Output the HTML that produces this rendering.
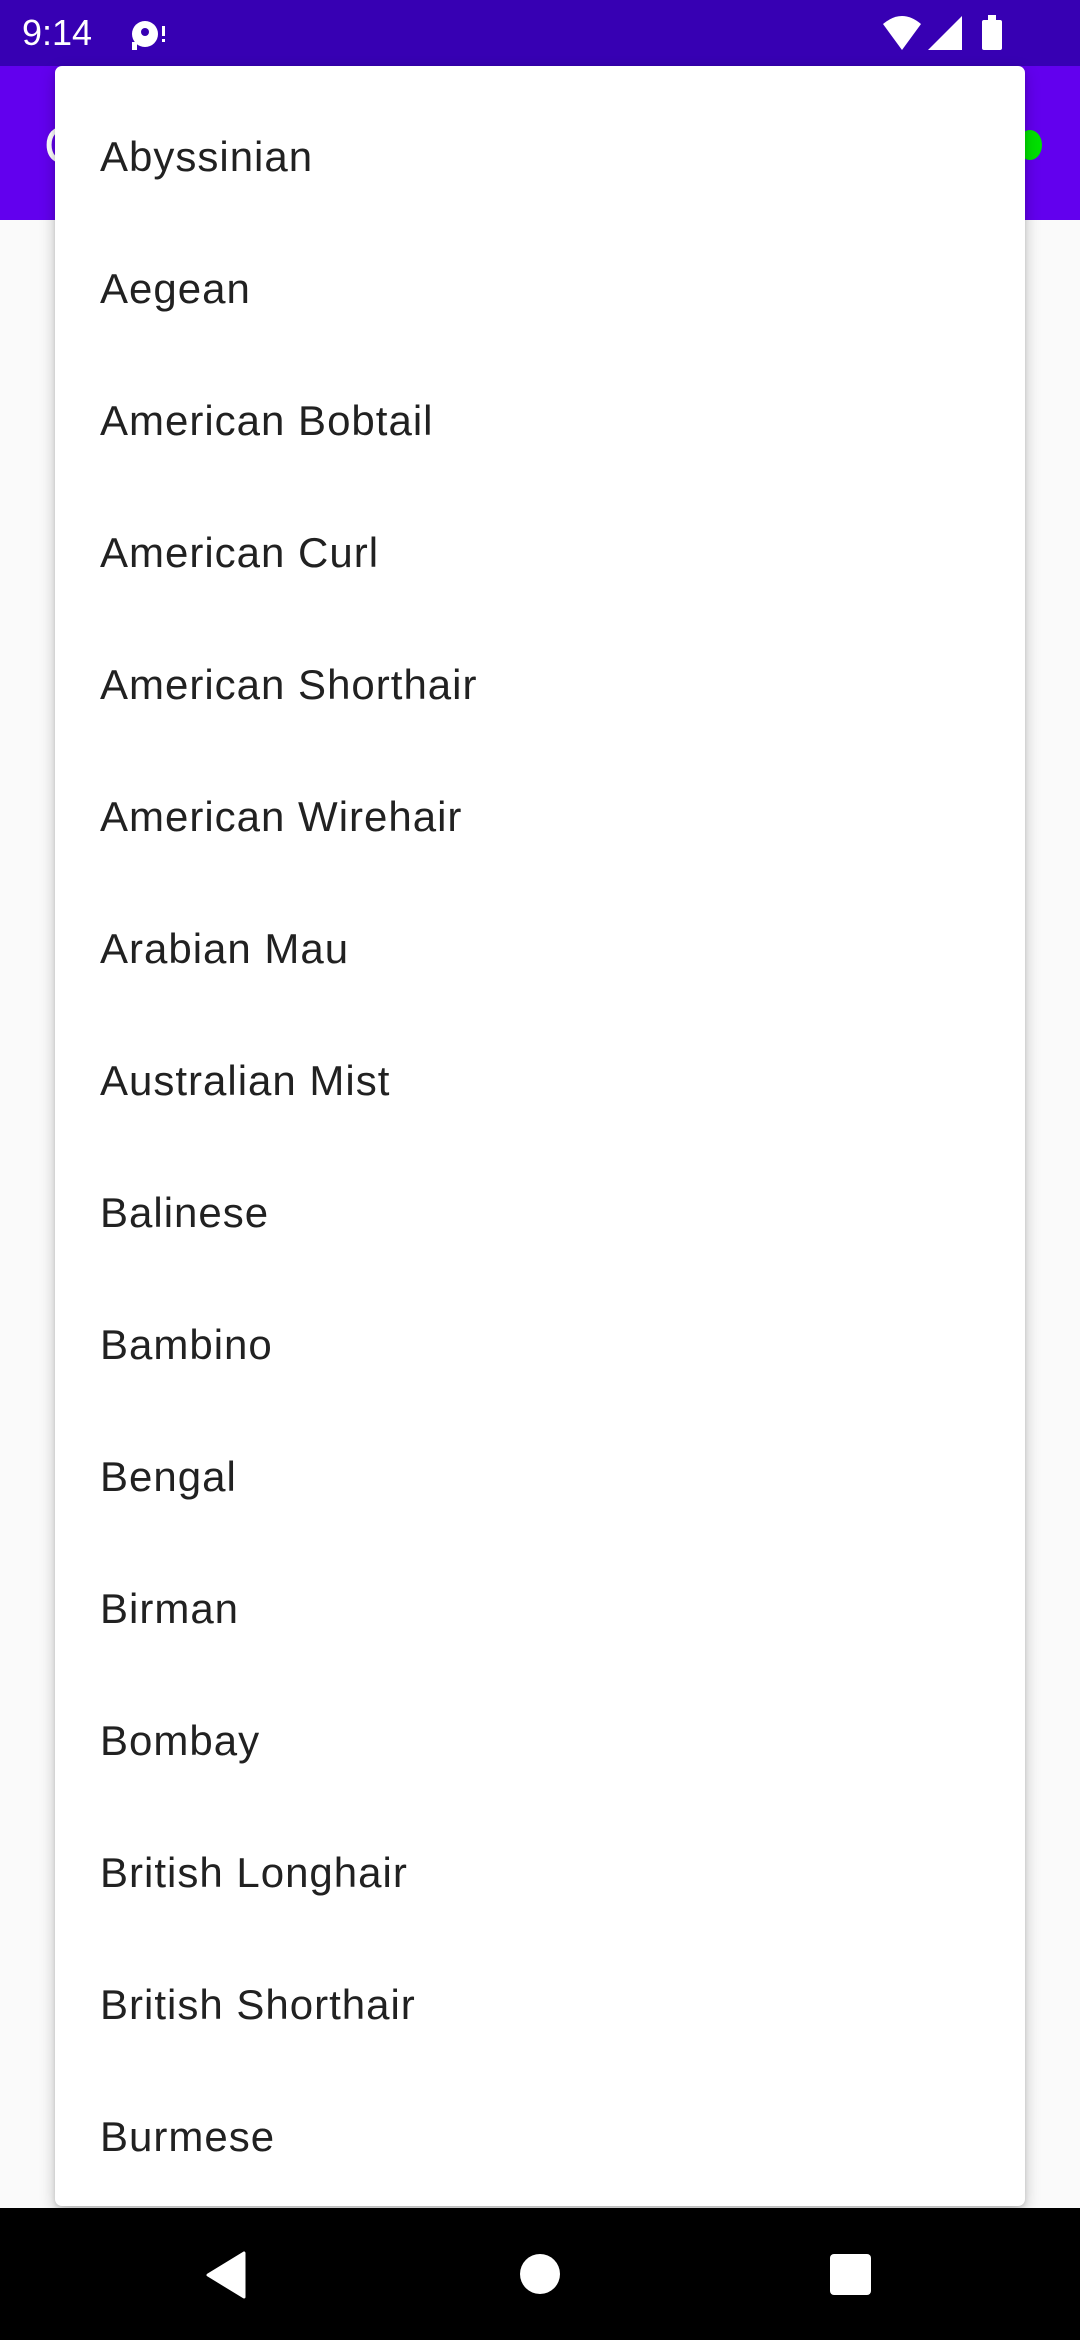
<!DOCTYPE html>
<html><head><meta charset="utf-8"><style>
*{margin:0;padding:0;box-sizing:border-box}
body{width:1080px;height:2340px;position:relative;overflow:hidden;background:#fafafa;font-family:"Liberation Sans",sans-serif}
#sb{position:absolute;left:0;top:0;width:1080px;height:66px;background:#3700b3;color:#fff}
#sb .t{position:absolute;left:22px;top:12px;font-size:36px}
#ab{position:absolute;left:0;top:66px;width:1080px;height:154px;background:#6200ee}
#ab .c{position:absolute;left:44px;top:50px;font-size:52px;color:#fff}
#ab .g{position:absolute;left:1018px;top:64px;width:24px;height:30px;border-radius:50%;background:#00e000}
#card{position:absolute;left:55px;top:66px;width:970px;height:2140px;background:#fff;border-radius:7px;box-shadow:0 6px 16px rgba(0,0,0,.22),0 2px 5px rgba(0,0,0,.12);padding-top:25px}
.it{height:132px;line-height:132px;padding-left:45px;font-size:42px;letter-spacing:1px;color:#212121}
#nb{position:absolute;left:0;top:2208px;width:1080px;height:132px;background:#000}
</style></head><body>
<div id="sb"><span class="t">9:14</span>
<svg style="position:absolute;left:128px;top:16px" width="40" height="36" viewBox="0 0 40 36"><circle cx="17" cy="18" r="13" fill="#fff"/><circle cx="17" cy="16" r="4" fill="#3700b3"/><rect x="4" y="26" width="5" height="8" fill="#fff"/><rect x="34" y="10" width="3" height="10" fill="#fff"/><rect x="34" y="23" width="3" height="3" fill="#fff"/></svg>
<svg style="position:absolute;left:880px;top:14px" width="130" height="40" viewBox="0 0 130 40"><path d="M3 10 Q22 -6 41 10 L22 36 Z" fill="#fff"/><path d="M48 36 L82 2 L82 36 Z" fill="#fff"/><rect x="102" y="6" width="20" height="30" rx="2" fill="#fff"/><rect x="108" y="1" width="8" height="6" fill="#fff"/></svg>
</div>
<div id="ab"><span class="c">C</span><div class="g"></div></div>
<div id="card">
<div class="it">Abyssinian</div>
<div class="it">Aegean</div>
<div class="it">American Bobtail</div>
<div class="it">American Curl</div>
<div class="it">American Shorthair</div>
<div class="it">American Wirehair</div>
<div class="it">Arabian Mau</div>
<div class="it">Australian Mist</div>
<div class="it">Balinese</div>
<div class="it">Bambino</div>
<div class="it">Bengal</div>
<div class="it">Birman</div>
<div class="it">Bombay</div>
<div class="it">British Longhair</div>
<div class="it">British Shorthair</div>
<div class="it">Burmese</div>
</div>
<div id="nb">
<svg style="position:absolute;left:200px;top:42px" width="50" height="50" viewBox="0 0 50 50"><path d="M44 3 L44 47 L8 25 Z" fill="#fff" stroke="#fff" stroke-width="3" stroke-linejoin="round"/></svg>
<div style="position:absolute;left:520px;top:46px;width:40px;height:40px;border-radius:50%;background:#fff"></div>
<div style="position:absolute;left:830px;top:46px;width:41px;height:41px;border-radius:4px;background:#fff"></div>
</div>
</body></html>
